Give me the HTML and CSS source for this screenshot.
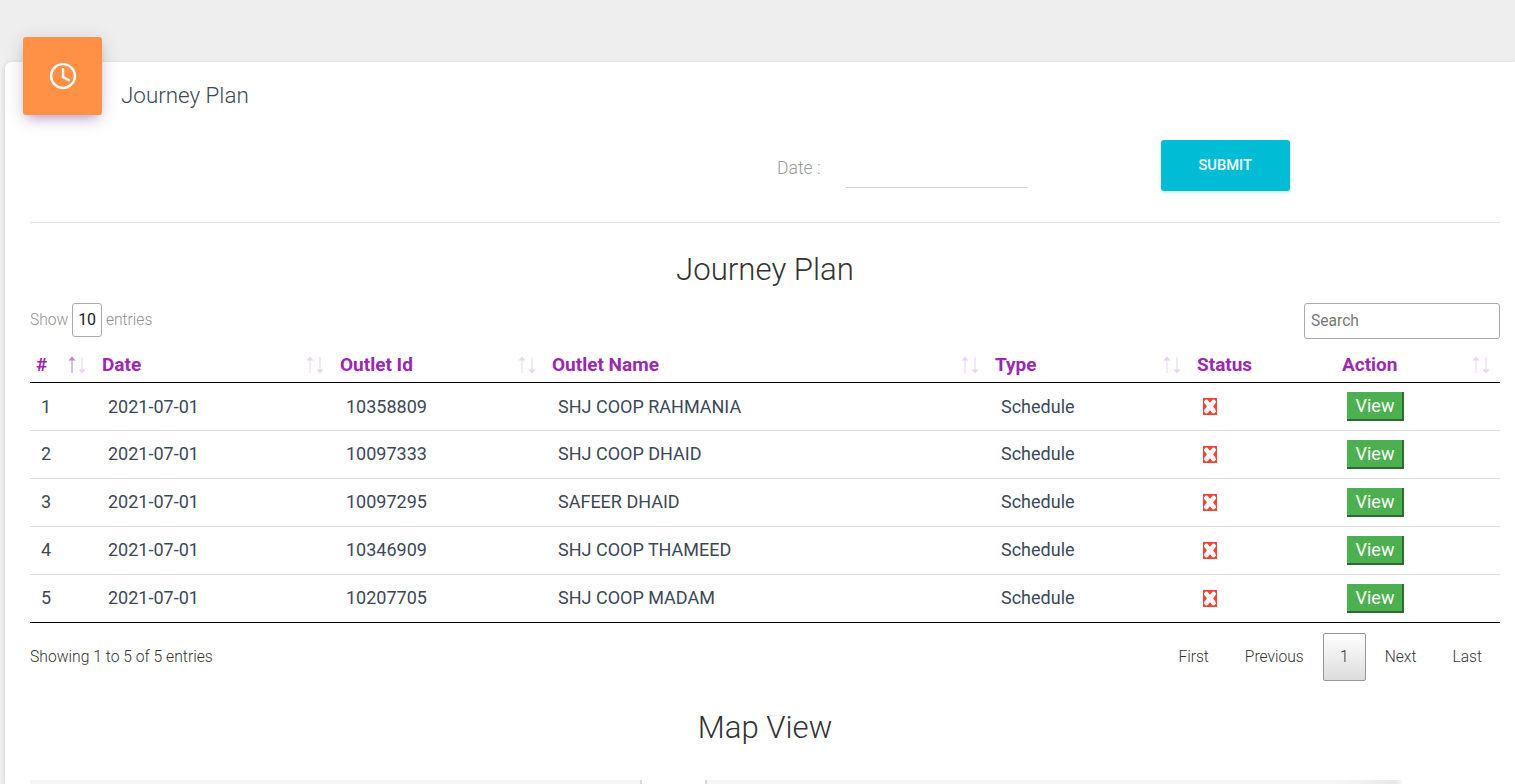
FILE: index.html
```html
<!DOCTYPE html>
<html lang="en">
<head>
    <meta charset="UTF-8">
    <title>Journey Plan</title>
    <link rel="stylesheet" href="styles.css">
</head>
<body>
    <svg class="defs" width="0" height="0">
        <symbol id="arrow-up" viewBox="0 0 9 18">
            <path d="M4 17V2" fill="none" stroke="currentColor"></path>
            <path d="M4 0.5L7.5 4.5H0.5z" fill="currentColor"></path>
        </symbol>
        <symbol id="arrow-down" viewBox="0 0 9 18">
            <path d="M4 1v15" fill="none" stroke="currentColor"></path>
            <path d="M4 17.5L7.5 13.5H0.5z" fill="currentColor"></path>
        </symbol>
        <symbol id="status-x" viewBox="0 0 14 17" preserveAspectRatio="none">
            <rect width="14" height="17" fill="#f44336"></rect>
            <path d="M3.4 4l7.2 9M10.6 4l-7.2 9" stroke="#fff" stroke-width="4.6" stroke-linecap="round"></path>
        </symbol>
    </svg>

    <div class="card">
        <div class="card-head">
            <div class="card-icon">
                <svg width="28" height="28" viewBox="0 0 24 24" fill="none" stroke="#fff" stroke-width="2.1">
                    <circle cx="12" cy="12" r="10.2"></circle>
                    <path d="M12 6.2v6.4l5 3" stroke-linecap="round"></path>
                </svg>
            </div>
            <h4 class="card-title">Journey Plan</h4>
        </div>

        <form class="date-form">
            <label class="date-label" for="date">Date :</label>
            <input class="date-input" type="text" id="date">
            <button class="submit-btn" type="button">SUBMIT</button>
        </form>
        <hr class="divider">

        <h3 class="section-title">Journey Plan</h3>

        <div class="table-top">
            <div class="length">Show <span class="length-box">10</span> entries</div>
            <input class="search" type="text" placeholder="Search">
        </div>

        <table class="plan-table">
            <colgroup>
                <col class="c-num"><col class="c-date"><col class="c-id"><col class="c-name">
                <col class="c-type"><col class="c-status"><col class="c-action">
            </colgroup>
            <thead>
                <tr>
                    <th><div class="th-in">#
                        <span class="sort"><svg class="on"><use href="#arrow-up"></use></svg><svg><use href="#arrow-down"></use></svg></span>
                    </div></th>
                    <th><div class="th-in">Date
                        <span class="sort"><svg><use href="#arrow-up"></use></svg><svg><use href="#arrow-down"></use></svg></span>
                    </div></th>
                    <th><div class="th-in">Outlet Id
                        <span class="sort"><svg><use href="#arrow-up"></use></svg><svg><use href="#arrow-down"></use></svg></span>
                    </div></th>
                    <th><div class="th-in">Outlet Name
                        <span class="sort"><svg><use href="#arrow-up"></use></svg><svg><use href="#arrow-down"></use></svg></span>
                    </div></th>
                    <th><div class="th-in">Type
                        <span class="sort"><svg><use href="#arrow-up"></use></svg><svg><use href="#arrow-down"></use></svg></span>
                    </div></th>
                    <th><div class="th-in">Status</div></th>
                    <th><div class="th-in">Action
                        <span class="sort"><svg><use href="#arrow-up"></use></svg><svg><use href="#arrow-down"></use></svg></span>
                    </div></th>
                </tr>
            </thead>
            <tbody>
                <tr>
                    <td>1</td><td>2021-07-01</td><td>10358809</td><td>SHJ COOP RAHMANIA</td><td>Schedule</td>
                    <td><svg class="status-x"><use href="#status-x"></use></svg></td><td><a class="view-btn">View</a></td>
                </tr>
                <tr>
                    <td>2</td><td>2021-07-01</td><td>10097333</td><td>SHJ COOP DHAID</td><td>Schedule</td>
                    <td><svg class="status-x"><use href="#status-x"></use></svg></td><td><a class="view-btn">View</a></td>
                </tr>
                <tr>
                    <td>3</td><td>2021-07-01</td><td>10097295</td><td>SAFEER DHAID</td><td>Schedule</td>
                    <td><svg class="status-x"><use href="#status-x"></use></svg></td><td><a class="view-btn">View</a></td>
                </tr>
                <tr>
                    <td>4</td><td>2021-07-01</td><td>10346909</td><td>SHJ COOP THAMEED</td><td>Schedule</td>
                    <td><svg class="status-x"><use href="#status-x"></use></svg></td><td><a class="view-btn">View</a></td>
                </tr>
                <tr>
                    <td>5</td><td>2021-07-01</td><td>10207705</td><td>SHJ COOP MADAM</td><td>Schedule</td>
                    <td><svg class="status-x"><use href="#status-x"></use></svg></td><td><a class="view-btn">View</a></td>
                </tr>
            </tbody>
        </table>

        <div class="table-bottom">
            <div class="info">Showing 1 to 5 of 5 entries</div>
            <div class="pager">
                <a>First</a><a>Previous</a><a class="current">1</a><a>Next</a><a>Last</a>
            </div>
        </div>

        <h3 class="section-title map-title">Map View</h3>
        <div class="map-strip">
            <div class="map-left"></div>
            <div class="map-right"></div>
        </div>
    </div>
</body>
</html>
```

FILE: styles.css
```css
html, body {
    height: 100%;
    overflow: hidden;
}
body {
    margin: 0;
    background-color: #eeeeee;
    font-family: Roboto, sans-serif;
    font-weight: 400;
    color: #3c4858;
}
.defs {
    display: block;
    height: 0;
}
.card {
    margin: 62px 0 0 5px;
    padding: 0 15px 0 25px;
    background: #fff;
    border-radius: 6px 0 0 0;
    box-shadow: 0 1px 4px rgba(0, 0, 0, 0.14);
}
.card-head {
    position: relative;
    height: 78px;
}
.card-icon {
    position: absolute;
    left: -7px;
    top: -25px;
    width: 79px;
    height: 78px;
    display: flex;
    align-items: center;
    justify-content: center;
    background: #ff9147;
    border-radius: 3px;
    box-shadow: 0 4px 20px rgba(0, 0, 0, 0.14), 0 7px 10px -5px rgba(156, 39, 176, 0.4);
}
.card-title {
    margin: 0;
    padding: 20px 0 0 91px;
    font-size: 22.4px;
    font-weight: 300;
    line-height: 27px;
    color: #3c4858;
}
.date-form {
    display: flex;
    align-items: flex-start;
    height: 82px;
}
.date-label {
    margin: 18px 25px 0 747px;
    font-size: 17.6px;
    font-weight: 300;
    line-height: 20px;
    color: #999;
}
.date-input {
    width: 182px;
    height: 47px;
    margin-top: 0;
    padding: 0;
    border: none;
    border-bottom: 1px solid #d2d2d2;
    outline: none;
}
.submit-btn {
    width: 129px;
    height: 51px;
    margin: 0 0 0 133px;
    padding: 0 0 2px;
    border: none;
    border-radius: 3px;
    background: #00bcd4;
    color: #fff;
    font-family: Roboto, sans-serif;
    font-size: 14.7px;
    font-weight: 500;
    box-shadow: 0 2px 2px rgba(0, 188, 212, 0.14), 0 1px 5px rgba(0, 188, 212, 0.12);
}
.divider {
    margin: 0;
    border: none;
    border-top: 1px solid #e3e3e3;
}
.section-title {
    margin: 0;
    padding-top: 27px;
    text-align: center;
    font-size: 31.2px;
    font-weight: 300;
    line-height: 40px;
    color: #333;
}
.table-top {
    display: flex;
    justify-content: space-between;
    align-items: flex-start;
    height: 44px;
    margin-top: 13px;
}
.length {
    font-size: 15.6px;
    font-weight: 300;
    line-height: 34px;
    color: #909090;
}
.length-box {
    display: inline-block;
    width: 28px;
    height: 32px;
    line-height: 32px;
    text-align: center;
    border: 1px solid #aaa;
    border-radius: 3px;
    color: #222;
    font-weight: 400;
    font-size: 16px;
    vertical-align: top;
}
.search {
    box-sizing: border-box;
    width: 196px;
    height: 36px;
    padding: 0 6px;
    border: 1px solid #aaa;
    border-radius: 3px;
    outline: none;
    font-family: Roboto, sans-serif;
    font-size: 15.6px;
    font-weight: 400;
}
.search::placeholder {
    color: #777;
}
.plan-table {
    width: 1470px;
    border-collapse: collapse;
    table-layout: fixed;
}
.c-num { width: 66px; }
.c-date { width: 238px; }
.c-id { width: 212px; }
.c-name { width: 443px; }
.c-type { width: 202px; }
.c-status { width: 145px; }
.plan-table th {
    height: 35px;
    padding: 0 9px 0 6px;
    border-bottom: 1px solid #000;
    text-align: left;
    font-size: 19px;
    font-weight: 700;
    color: #9c27b0;
}
.th-in {
    display: flex;
    justify-content: space-between;
    align-items: center;
    line-height: 24px;
}
.sort {
    display: flex;
    gap: 1px;
}
.sort svg {
    width: 9px;
    height: 18px;
    color: #9c27b0;
    opacity: 0.2;
}
.sort svg.on {
    opacity: 0.6;
}
.plan-table td {
    height: 46px;
    padding: 0 12px 1px;
    border-bottom: 1px solid #ddd;
    font-size: 18px;
    color: #3c4858;
}
.plan-table tbody tr + tr td:nth-child(-n+5) {
    height: 44px;
    padding-bottom: 3px;
}
.plan-table tbody tr:last-child td {
    border-bottom: 1px solid #000;
}
.plan-table td:first-child {
    padding-left: 11px;
}
.status-x {
    display: block;
    width: 14px;
    height: 17px;
    margin-top: 1px;
}
.view-btn {
    display: block;
    box-sizing: border-box;
    width: 57px;
    height: 29px;
    margin: 1px 0 0 -1px;
    padding-left: 1px;
    background: #4caf50;
    border-right: 2px solid #2f6b32;
    border-bottom: 2px solid #2f6b32;
    color: #fff;
    text-align: center;
    font-size: 18px;
    line-height: 27px;
}
.table-bottom {
    display: flex;
    justify-content: space-between;
    align-items: flex-start;
    height: 75px;
    padding-top: 10px;
}
.info {
    padding-top: 14px;
    font-size: 15.7px;
    font-weight: 300;
    line-height: 20px;
    color: #333;
}
.pager {
    display: flex;
    font-size: 15.6px;
    font-weight: 300;
    color: #333;
}
.pager a {
    display: block;
    box-sizing: border-box;
    height: 48px;
    line-height: 46px;
    padding: 0 17px;
    border: 1px solid transparent;
    border-radius: 2px;
}
.pager a.current {
    width: 43px;
    padding: 0;
    margin: 0 1px;
    text-align: center;
    border-color: #979797;
    background: linear-gradient(to bottom, #fff 0%, #dcdcdc 100%);
}
.map-title {
    padding-top: 0;
}
.map-strip {
    display: flex;
    height: 4px;
    margin-top: 32px;
}
.map-left {
    box-sizing: border-box;
    width: 612px;
    background: #f5f6f8;
    border-right: 2px solid #d8d8d8;
}
.map-right {
    box-sizing: border-box;
    width: 698px;
    margin-left: 63px;
    background: linear-gradient(to right, #f5f6f8 90%, #e8e8e8 99%, #fff 100%);
    border-left: 2px solid #d8d8d8;
}
```
